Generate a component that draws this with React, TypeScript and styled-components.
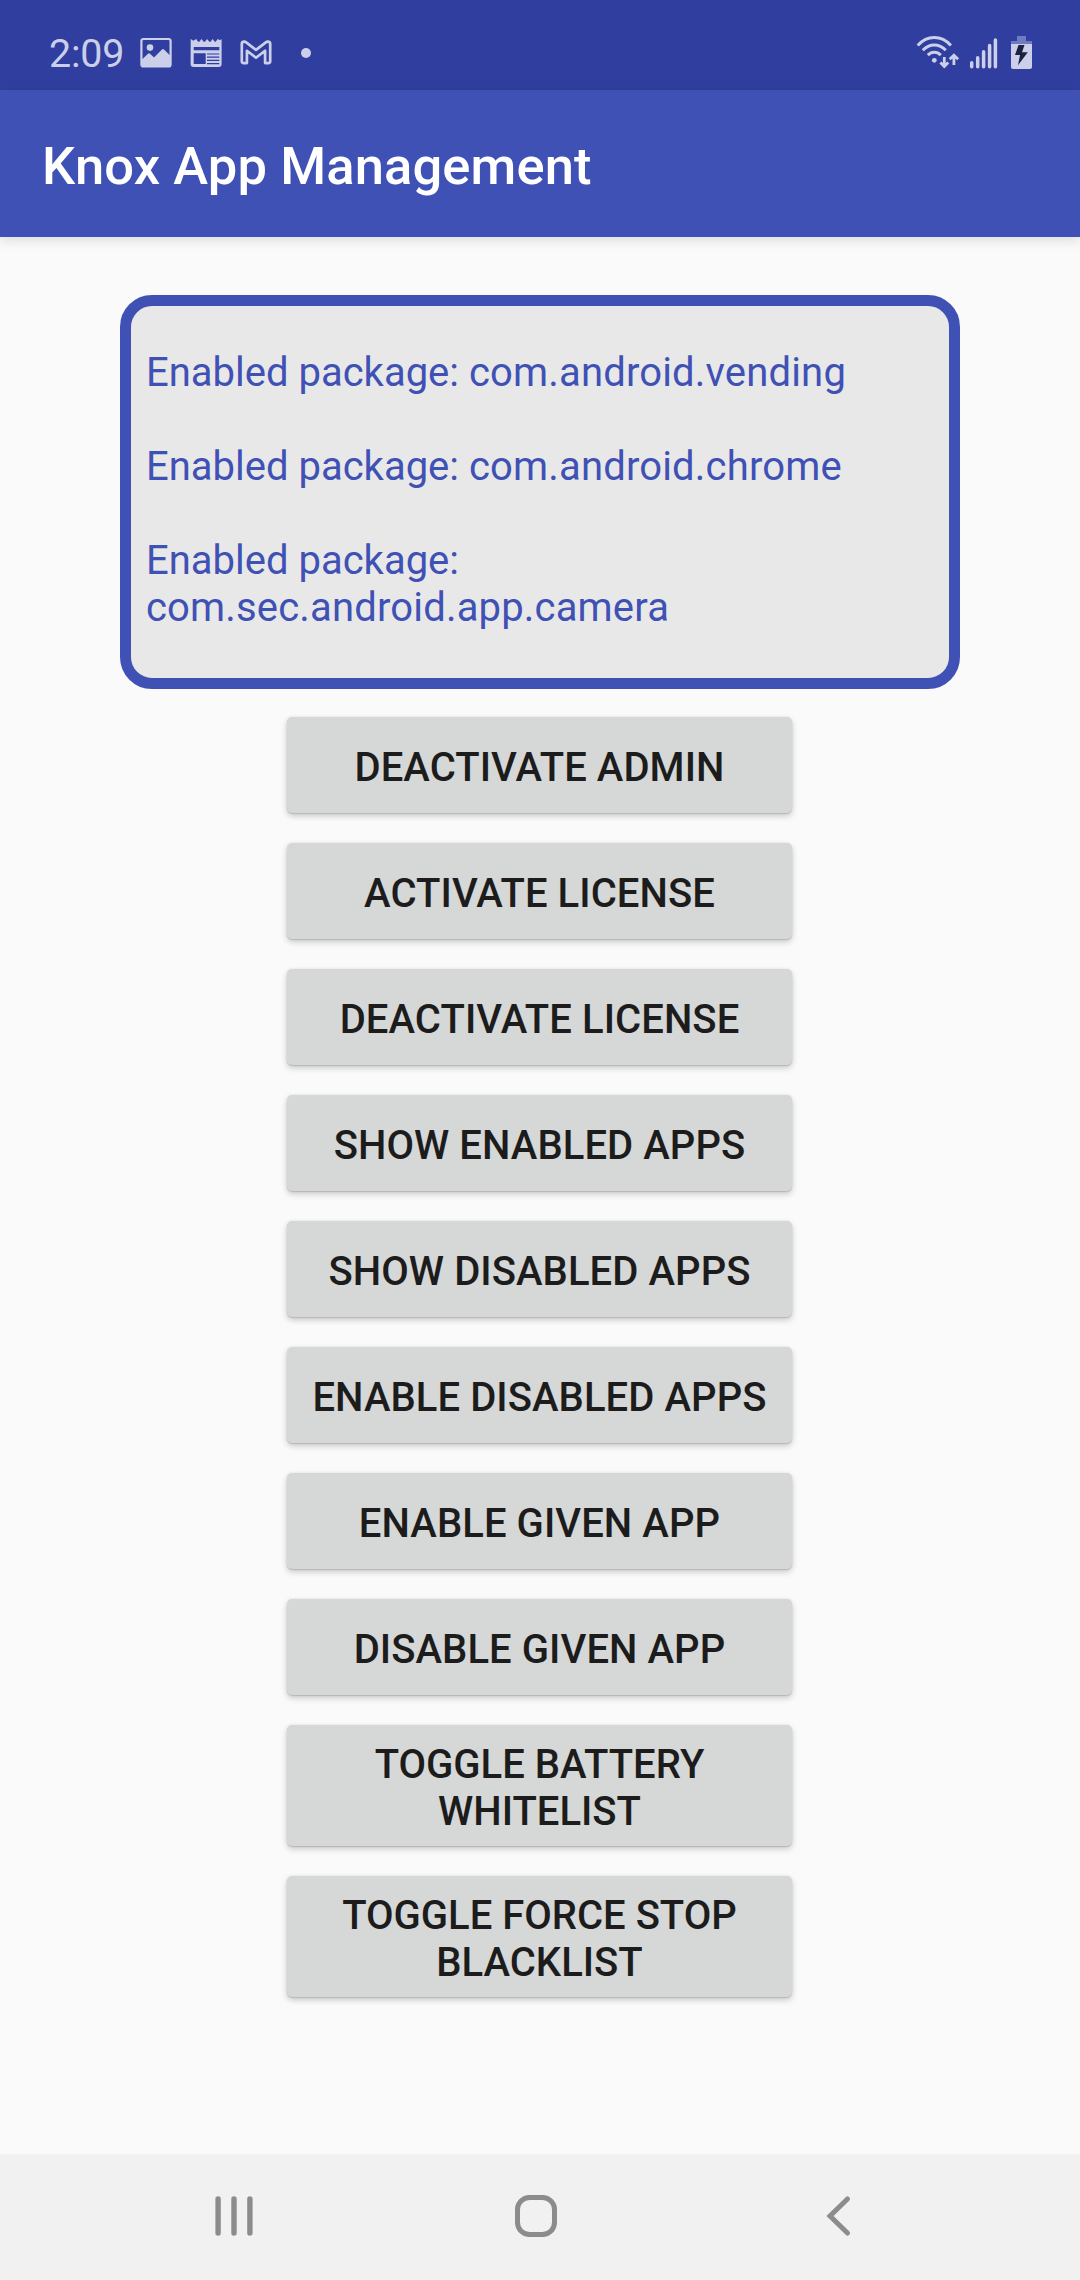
import React from "react";
import styled, { createGlobalStyle } from "styled-components";

const GlobalStyle = createGlobalStyle`
  html, body { margin: 0; padding: 0; background: #fafafa; }
  *, *::before, *::after { box-sizing: border-box; }
`;

const Screen = styled.div`
  display: flex;
  flex-direction: column;
  width: 1080px;
  height: 2280px;
  overflow: hidden;
  background: #fafafa;
  font-family: Roboto, "Liberation Sans", sans-serif;
`;

const StatusBar = styled.header`
  display: flex;
  justify-content: space-between;
  flex: none;
  height: 90px;
  padding: 0 48px 0 49px;
  background: #303f9f;
  color: #cbcfe9;
`;

const StatusGroup = styled.div`
  display: flex;
`;

const Clock = styled.time`
  width: 91px;
  padding-top: 31px;
  font-size: 39.4px;
  line-height: 46px;
  letter-spacing: -0.2px;
  white-space: nowrap;
`;

const Glyph = styled.svg`
  display: block;
  flex: none;
`;

const AppBar = styled.div`
  display: flex;
  align-items: center;
  flex: none;
  height: 147px;
  padding: 4px 42px 0;
  background: #3f51b5;
  box-shadow: 0 3px 12px rgba(0, 0, 0, 0.13);
`;

const Title = styled.h1`
  margin: 0;
  color: #fff;
  font-size: 52.5px;
  font-weight: 500;
  line-height: 62px;
  letter-spacing: 0.12px;
  white-space: nowrap;
`;

const Content = styled.main`
  display: flex;
  flex: 1;
  flex-direction: column;
  align-items: center;
  padding-top: 58px;
`;

const LogPanel = styled.section`
  display: flex;
  flex-direction: column;
  gap: 47px;
  width: 840px;
  height: 394px;
  padding: 43px 15px 0;
  border: 11px solid #3f51b5;
  border-radius: 32px;
  background: #e8e8e8;
`;

const LogLine = styled.p`
  margin: 0;
  color: #3f51b5;
  font-size: 40px;
  line-height: 47px;
`;

const PackageName = styled.span`
  letter-spacing: 0.17px;
`;

const Actions = styled.div`
  display: flex;
  flex-direction: column;
  gap: 30px;
  width: 505px;
  margin: 28px 1px 0 0;
`;

const ActionButton = styled.button<{ $tall?: boolean }>`
  display: flex;
  align-items: center;
  justify-content: center;
  height: ${(p) => (p.$tall ? 121 : 96)}px;
  margin: 0;
  padding: ${(p) => (p.$tall ? "6px 20px 1px" : "4px 20px 0")};
  border: 0;
  border-radius: 5px;
  background: #d6d7d7;
  box-shadow: 0 1px 1px rgba(0, 0, 0, 0.12), 0 3px 6px rgba(0, 0, 0, 0.2), 0 0 3px rgba(0, 0, 0, 0.06);
  color: #1c1c1c;
  font-family: inherit;
  font-size: 40px;
  font-weight: 500;
  line-height: 47px;
  letter-spacing: ${(p) => (p.$tall ? 0 : 0.07)}px;
  text-align: center;
  white-space: pre-line;
`;

const NavBar = styled.nav`
  display: flex;
  flex: none;
  justify-content: center;
  align-items: center;
  gap: 242px;
  height: 126px;
  padding: 0 8px 2px 0;
  background: #f1f1f1;
`;

const NavButton = styled.button`
  display: grid;
  place-items: center;
  width: 60px;
  height: 60px;
  padding: 0;
  border: 0;
  background: none;
`;

const packages = [
  "com.android.vending",
  "com.android.chrome",
  "com.sec.android.app.camera",
];

const actions = [
  "DEACTIVATE ADMIN",
  "ACTIVATE LICENSE",
  "DEACTIVATE LICENSE",
  "SHOW ENABLED APPS",
  "SHOW DISABLED APPS",
  "ENABLE DISABLED APPS",
  "ENABLE GIVEN APP",
  "DISABLE GIVEN APP",
  "TOGGLE BATTERY\nWHITELIST",
  "TOGGLE FORCE STOP\nBLACKLIST",
];

function NotificationIcons() {
  return (
    <Glyph width="180" height="90" viewBox="140 0 180 90" fill="none" stroke="currentColor">
      <rect x="141.4" y="39" width="29.2" height="27.4" rx="2" strokeWidth="2.2" />
      <circle cx="150" cy="47.6" r="3.3" fill="currentColor" stroke="none" />
      <path d="M142 59.5l6-5.8q1-.8 2 .1l4 3.7 8-8q1-1 2 0l6.6 6.5V67H142z" fill="currentColor" stroke="none" />

      <path
        d="M190.7 39l2.7 1.8 2.7-1.8 2 2.7h1.2l2.2-2.7 2.2 2.7h1.2l2.2-2.7 2.2 2.7h1.2l2.2-2.7 2 2.7h1l2-2.7 2.3 1.2 1.6-1.2V64q0 3-3 3h-25q-3 0-3-3z"
        fill="currentColor"
        stroke="none"
      />
      <path d="M193.7 47h25.6v3.3h-25.6zM193.7 53.2h12v10.7h-12z" fill="#303f9f" stroke="none" />
      <path d="M207 54h12.3M207 57.2h12.3M207 60.4h12.3M207 63.6h12.3" stroke="#303f9f" strokeWidth="1.2" />

      <path
        d="M241.8 44v17.3q0 1.8 1.8 1.8h3.3V50.8l9.1 7 9.1-7v12.3h3.3q1.8 0 1.8-1.8V44q0-2.3-2.3-2.3-1.2 0-2.4.9L256 49.9l-9.5-7.3q-1.2-.9-2.4-.9-2.3 0-2.3 2.3z"
        strokeWidth="2.7"
        strokeLinejoin="round"
      />
      <circle cx="306" cy="53" r="5" fill="currentColor" stroke="none" />
    </Glyph>
  );
}

function SystemIcons() {
  return (
    <Glyph width="122" height="90" viewBox="910 0 122 90" fill="none" stroke="currentColor">
      <g strokeWidth="3">
        <path d="M917.7 45.4q7.2-7.9 16.6-7.9t16.6 7.9" />
        <path d="M922.8 50.2q5-5.3 11.5-5.3t11.5 5.3" />
        <path d="M927.8 55.1q2.8-2.9 6.5-2.9t6.5 2.9" />
      </g>
      <circle cx="934.3" cy="60.3" r="2.4" fill="currentColor" stroke="none" />
      <g strokeWidth="2.8">
        <path d="M944.3 57v9.5M940.4 62.4l3.9 4 3.9-4" />
        <path d="M953.9 65v-9.5M949.7 59.2l4.2-4 4.2 4" />
      </g>
      <g strokeWidth="3.5" strokeLinecap="round">
        <path d="M971.7 62.8v4M977.7 57.7v9.1M983.6 51.7v15.1M989.6 45.4v21.4M995.4 40v26.8" />
      </g>
      <path d="M1017 36h9v5h6v3h-21v-3h6z" fill="#707ac0" stroke="none" />
      <path d="M1011 44h21v23q0 2-2 2h-17q-2 0-2-2z" fill="currentColor" stroke="none" />
      <path d="M1018.5 45h6l-2.5 7.3h5.8L1018 65.2l2-10.2h-5z" fill="#1c2140" stroke="none" />
    </Glyph>
  );
}

export default function App() {
  return (
    <>
      <GlobalStyle />
      <Screen>
        <StatusBar>
          <StatusGroup>
            <Clock>2:09</Clock>
            <NotificationIcons />
          </StatusGroup>
          <SystemIcons />
        </StatusBar>
        <AppBar>
          <Title>Knox App Management</Title>
        </AppBar>
        <Content>
          <LogPanel>
            {packages.map((name) => (
              <LogLine key={name}>
                Enabled package: <PackageName>{name}</PackageName>
              </LogLine>
            ))}
          </LogPanel>
          <Actions>
            {actions.map((label) => (
              <ActionButton key={label} $tall={label.includes("\n")}>
                {label}
              </ActionButton>
            ))}
          </Actions>
        </Content>
        <NavBar>
          <NavButton aria-label="Recent apps">
            <Glyph width="60" height="60" viewBox="0 0 60 60" stroke="#8c8c8c" strokeWidth="5.4" strokeLinecap="round">
              <path d="M14.1 13v34M30 13v34M45.9 13v34" />
            </Glyph>
          </NavButton>
          <NavButton aria-label="Home">
            <Glyph width="60" height="60" viewBox="0 0 60 60" fill="none" stroke="#8c8c8c" strokeWidth="5">
              <rect x="11.5" y="11.5" width="37" height="37" rx="12" />
            </Glyph>
          </NavButton>
          <NavButton aria-label="Back">
            <Glyph width="60" height="60" viewBox="0 0 60 60" fill="none" stroke="#8c8c8c" strokeWidth="5" strokeLinecap="round">
              <path d="M39.5 13L22 30l17.500 17" />
            </Glyph>
          </NavButton>
        </NavBar>
      </Screen>
    </>
  );
}
